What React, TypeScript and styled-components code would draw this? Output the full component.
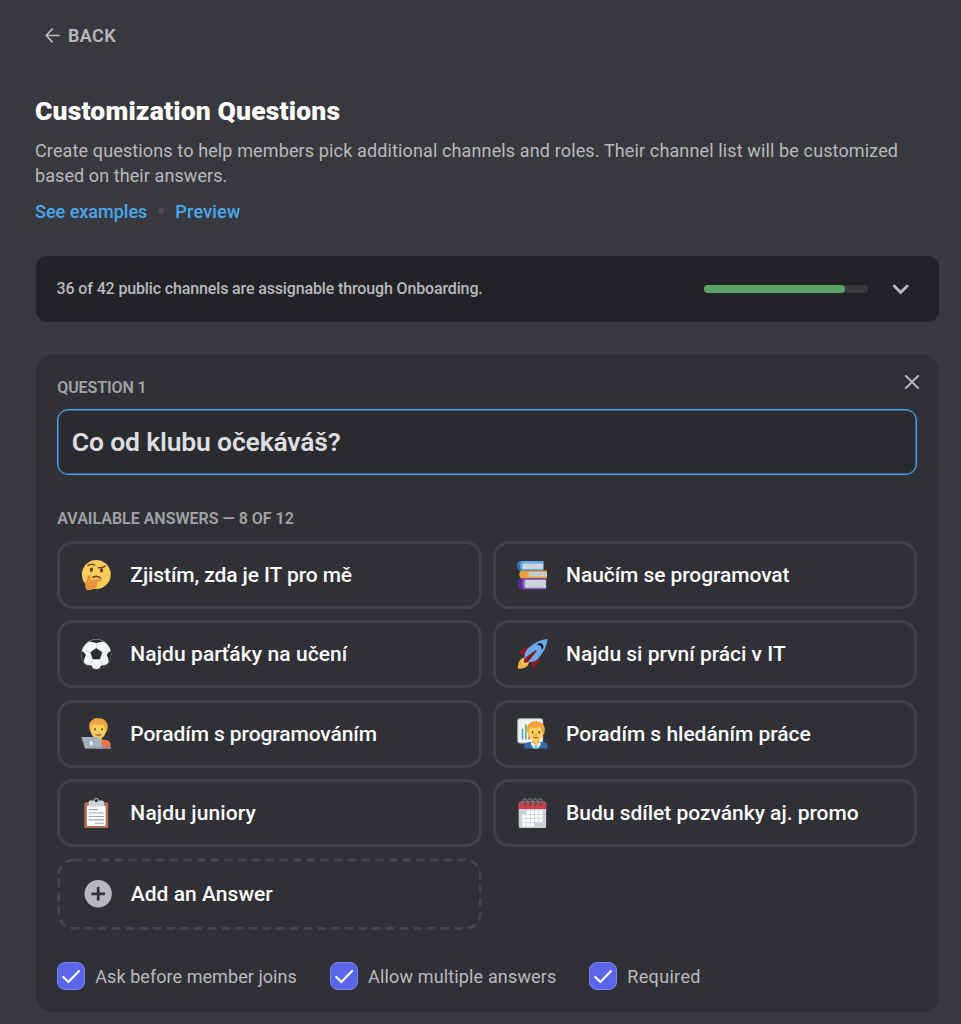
import React from 'react';
import styled, { createGlobalStyle, css } from 'styled-components';

const GlobalStyle = createGlobalStyle`
  *, *::before, *::after { box-sizing: border-box; }
  body {
    margin: 0;
    background: #38393e;
    color: #b8b9bd;
    font-family: Roboto, "Liberation Sans", sans-serif;
    font-size: 18px;
  }
`;

const Page = styled.main`
  display: flex;
  flex-direction: column;
  height: 1024px;
  overflow: hidden;
  padding: 23px 22px 0 35px;
`;

const Tracked = styled.span<{ $track?: number }>`
  letter-spacing: ${({ $track = 0 }) => $track}px;
  white-space: nowrap;
`;

const BackLink = styled.a`
  display: flex;
  align-items: center;
  gap: 8px;
  height: 24px;
  padding-left: 10px;
  font-weight: 600;
  letter-spacing: 0.4px;
`;

const Title = styled.h1`
  margin: 48px 0 0;
  color: #fff;
  font-size: 26.5px;
  font-weight: 900;
  line-height: 32px;
  letter-spacing: 0.17px;
`;

const Description = styled.p`
  display: flex;
  flex-direction: column;
  margin: 12px 0 0;
  line-height: 24.5px;
`;

const Links = styled.nav`
  display: flex;
  align-items: center;
  height: 24px;
  margin-top: 11px;
  color: #4ba6ee;
  font-weight: 500;
`;

const Dot = styled.span`
  width: 6px;
  height: 6px;
  margin: 0 11px;
  border-radius: 50%;
  background: #4b4c52;
`;

const Coverage = styled.section`
  display: flex;
  flex-shrink: 0;
  align-items: center;
  height: 66px;
  margin: 33px 0 0 0.6px;
  padding: 0 29px 0 21px;
  border-radius: 11px;
  background: #222327;
  font-size: 16px;
  font-weight: 500;
`;

const CoverageText = styled(Tracked)`
  padding-bottom: 1px;
`;

const Meter = styled.div`
  width: 164.5px;
  height: 8px;
  margin: 0 24px 0 auto;
  border-radius: 4px;
  background: #37393e;
`;

const MeterFill = styled.div`
  height: 100%;
  border-radius: 4px;
  background: #5da365;
`;

const Card = styled.section`
  display: flex;
  flex-shrink: 0;
  flex-direction: column;
  height: 657px;
  margin: 33px 0 0 0.6px;
  padding: 19px 21.7px 0;
  border-radius: 16px;
  background: #303136;
`;

const CardHeader = styled.header`
  display: flex;
  justify-content: space-between;
  height: 35px;
  margin-right: -2.4px;
`;

const Label = styled.h2<{ $track?: number }>`
  margin: 0;
  color: #a2a3a8;
  font-size: 16px;
  font-weight: 600;
  line-height: 27px;
  letter-spacing: ${({ $track = 0 }) => $track}px;
`;

const QuestionField = styled.div`
  display: flex;
  align-items: center;
  height: 66px;
  padding: 0 13px 2px 13.5px;
  border: 1px solid #48a5ed;
  border-radius: 11px;
  background: #2a2b2f;
  box-shadow: inset 0 0 0 0.5px #48a5ed;
  color: #dddee1;
  font-size: 26.5px;
  font-weight: 600;
`;

const AnswersLabel = styled(Label)`
  margin-top: 30px;
`;

const AnswerGrid = styled.div`
  display: grid;
  grid-template-columns: 1fr 1fr;
  gap: 11.4px;
  margin-top: 9px;
`;

const tile = css`
  display: flex;
  align-items: center;
  border-radius: 16px;
  color: #fbfbfc;
  font-size: 21px;
  font-weight: 500;
`;

const Answer = styled.div`
  ${tile}
  gap: 18.3px;
  height: 68px;
  padding-left: 21.2px;
  border: 3px solid #3f4146;
`;

const AddAnswer = styled.div`
  ${tile}
  position: relative;
  gap: 18.2px;
  height: 72px;
  margin-top: -0.6px;
  padding-left: 27.2px;
`;

const DashedOutline = styled.svg`
  position: absolute;
  inset: 0;
  width: 100%;
  height: 100%;
`;

const Options = styled.div`
  display: flex;
  height: 28px;
  margin-top: 32px;
`;

const Option = styled.label<{ $width?: number }>`
  display: flex;
  align-items: center;
  gap: 10.4px;
  width: ${({ $width }) => ($width ? `${$width}px` : 'auto')};
`;

const OptionText = styled(Tracked)`
  padding-top: 2px;
`;

const CheckBox = styled.span`
  display: flex;
  flex-shrink: 0;
  align-items: center;
  justify-content: center;
  width: 27.6px;
  height: 28px;
  border: 1.4px solid #7b84f1;
  border-radius: 8px;
  background: #5a65ea;
`;

const EmojiSvg = styled.svg`
  display: block;
  flex-shrink: 0;
  width: 30.6px;
  height: 30.6px;
`;

const Emoji = ({ children }: { children: React.ReactNode }) => (
  <EmojiSvg viewBox="0 0 36 36">{children}</EmojiSvg>
);

const Thinking = () => (
  <Emoji>
    <circle cx="18" cy="17" r="17" fill="#f9cb5c" />
    <ellipse cx="12.2" cy="11.6" rx="1.9" ry="2.7" fill="#65471b" />
    <ellipse cx="24.2" cy="12.2" rx="1.9" ry="2.7" fill="#65471b" />
    <path d="M8.2 6.6Q12 3.7 16.3 6" fill="none" stroke="#65471b" strokeWidth="1.6" strokeLinecap="round" />
    <path d="M20.3 9Q24.500 9.600 28.700 7.200" fill="none" stroke="#65471b" strokeWidth="1.6" strokeLinecap="round" />
    <path d="M14 20.300Q19 17.900 23 21.200" fill="none" stroke="#65471b" strokeWidth="1.8" strokeLinecap="round" />
    <path
      d="M8.5 19c.8-1.5 3-1.2 3.100.6.100 1.500-.7 2.800-.3 3.800 4-.3 8.100-1.400 11.800-1.300 1.800.1 2 2.300.3 2.800l-5.700 1.400c1.500.2 2 1.300 1.300 2.300.5 1-.1 1.900-.9 2.400.1 1.300-.8 2-2 2.400-2.800 1-6.400 3.800-9.400 1.600C4 33 4.800 27 6.700 23.500z"
      fill="#e99440"
    />
    <path d="M13 27l5.500-.900M13.500 30l4.500-1" fill="none" stroke="#d6843a" strokeWidth=".6" />
  </Emoji>
);

const Football = () => (
  <Emoji>
    <circle cx="18" cy="18" r="17.600" fill="#f1f5f9" stroke="#59636c" strokeWidth=".5" />
    <g fill="#292c31">
      <path d="M18 10.500l7 5.100-2.700 8.200h-8.600L11 15.600z" />
      <path d="M9.300 2.700Q18-1.600 26.700 2.700L23.500 3.500 18 4.700l-5.500-1.200z" />
      <path d="M35.400 14.500q1 7-2.700 13l-.6-4.300-1.800-4.500 2.300-3.500z" />
      <path d="M.6 14.500q-1 7 2.700 13l.6-4.300 1.800-4.500-2.300-3.500z" />
      <path d="M14.500 35.300q-6.500-1.200-10.500-7l3.300 2.300 4.900.7 1.300 1.800z" />
      <path d="M21.500 35.300q6.500-1.200 10.500-7l-3.300 2.300-4.900.7-1.300 1.800z" />
    </g>
    <path
      d="M18 4.700V11M25 16l6-2.200M22.300 24l3.400 7M13.700 24l-3.400 7M11 16L5 13.800"
      fill="none"
      stroke="#c5cfd8"
      strokeWidth=".8"
    />
  </Emoji>
);

const Books = () => (
  <Emoji>
    <path d="M4 21.800h30.500v12.700H4q-2.700-.8-2.700-6.300T4 21.800z" fill="#8c62c8" />
    <path d="M7.500 21.800q-2.200 6 0 12.700H4q-2.800-.6-2.800-6.300T4 21.800z" fill="#51308c" />
    <path d="M10.300 23.600H34v9H10.300q-2.600-4.500 0-9z" fill="#ccd4dc" />
    <path d="M5 12.300h30.300v9.200H5q-2.300-.8-2.300-4.600T5 12.300z" fill="#eb9c3d" />
    <path d="M14.500 14.300h20.800v5.200H14.500q-2.300-2.600 0-5.200z" fill="#ccd4dc" />
    <path d="M14 16.900h21" stroke="#9ba8b2" strokeWidth=".8" />
    <path d="M3 1.300h28.300V12.300H3Q.3 11 .3 6.900T3 1.300z" fill="#65a9e7" />
    <path d="M5 1.300q-2.500 5.500 0 11H3Q.3 11.200.3 6.900T3 1.300z" fill="#316da6" />
    <path d="M7.500 4h23.300V10.600H7.500q-2.400-3.300 0-6.600z" fill="#ccd4dc" />
  </Emoji>
);

const Rocket = () => (
  <Emoji>
    <path fill="#8c1a25" d="M1 17l8-7 16 1 1 16-7 8s.001-5.999-6-12-12-6-12-6z" />
    <path
      fill="#f5ad47"
      d="M.973 35s-.036-7.979 2.985-11S15 21.187 15 21.187 14.999 29 11.999 32c-3 3-11.026 3-11.026 3z"
    />
    <circle fill="#f9cb5c" cx="9" cy="27" r="4" />
    <path fill="#69abeb" d="M35.999 0s-10 0-22 10c-6 5-6 14-4 16s11 2 16-4c10-12 10-22 10-22z" />
    <path
      fill="#05070a"
      d="M26.999 5c-1.623 0-3.013.971-3.641 2.360.502-.227 1.055-.360 1.641-.360 2.209 0 4 1.791 4 4 0 .586-.133 1.139-.359 1.640 1.389-.627 2.359-2.017 2.359-3.640 0-2.209-1.791-4-4-4z"
    />
    <path fill="#8c1a25" d="M8 28s0-4 1-5 13.001-10.999 14-10-9.001 13-10.001 14S8 28 8 28z" />
  </Emoji>
);

const Head = () => (
  <g>
    <path d="M16.500 20h8v7.500q-4 4-8 0z" fill="#f2bd4b" />
    <path d="M10 13Q8.500 6 12.500 3 16-.6 21 .3q5.500-.3 8.700 4.200 3 4 1 10.500l-1.500 2H11.500z" fill="#f2a340" />
    <path d="M11.500 13.500q-.2-4.500 3.500-6 4.500 1.400 10-.2 3.700 1.700 4 6.200 1 9.500-8.500 10.700-9.500-1.200-9-10.700z" fill="#f9cf60" />
    <ellipse cx="16.500" cy="13.300" rx="1" ry="1.500" fill="#65471b" />
    <ellipse cx="24.700" cy="13.300" rx="1" ry="1.500" fill="#65471b" />
    <path d="M19.700 16.900h2" stroke="#c58a3b" strokeWidth="1" strokeLinecap="round" />
    <path d="M17 19.500q3.600 2 7.200 0-3.600.4-7.200 0z" fill="#a8572d" stroke="#a8572d" strokeWidth=".8" />
  </g>
);

const Technologist = () => (
  <Emoji>
    <path d="M17 36v-7q0-3 5-3.500h7q5.800.5 5.800 6V36z" fill="#e5744b" />
    <Head />
    <path d="M.8 22.500h19.500q1 0 1.300 1L26 35.800H4.800z" fill="#a5b2be" />
    <path d="M.8 22.500q-1.200 0-.7 1.500L4 35q.3.900 1.400.9z" fill="#6c7a86" />
    <path d="M22 33.800h12.500q1 .2.700 2.200H5z" fill="#8796a3" />
    <path d="M1.500 23h18.700q.8 0 1 .8L25.300 34.700H5.300z" fill="#a5b2be" />
    <ellipse cx="12" cy="29.500" rx="1.800" ry="2.600" fill="#edf1f5" transform="rotate(-12 12 29.500)" />
  </Emoji>
);

const OfficeWorker = () => (
  <Emoji>
    <rect x=".3" y=".2" width="30.500" height="29.800" rx="3.500" fill="#bcc8d3" />
    <rect x="1.700" y="1.600" width="27.700" height="27" rx="2.500" fill="#f0f4f7" />
    <path d="M6.500 12.500v12.700" stroke="#5596dc" strokeWidth="1.900" />
    <path d="M10.400 7.500v17.700" stroke="#74ad57" strokeWidth="1.900" />
    <path d="M14.500 20v5.200" stroke="#cf3b4c" strokeWidth="1.900" />
    <path d="M8.500 36v-3q.2-3.800 5-4.500l8.500-.8 9 .8q4.700.8 5 4.500v3z" fill="#326fa8" />
    <g transform="translate(2.500 3.600) scale(.96 .98)">
      <Head />
    </g>
    <path d="M17 28.300l5.200 3.500 5.100-3.500.8 2.200-3.200 5.500h-5.500l-3.200-5.500z" fill="#e8eef4" />
    <path d="M20.800 32h2.800l.8 4h-4.400z" fill="#79b5ea" />
  </Emoji>
);

const Clipboard = () => (
  <Emoji>
    <rect x="4" y="5" width="28" height="31" rx="2" fill="#b96e56" />
    <rect x="7" y="9" width="22" height="24" rx="1" fill="#fff" />
    <path
      fill="#ccd6dd"
      d="M25 3h-4c0-1.657-1.343-3-3-3s-3 1.343-3 3h-4c-1.104 0-2 .896-2 2v5h18V5c0-1.104-.896-2-2-2z"
    />
    <circle fill="#292f33" cx="18" cy="3" r="2" />
    <path
      d="M9.500 13.700h10M9.500 17.700h17M9.500 21.700h17M9.500 25.700h17M16.500 29.700h10"
      stroke="#99a8b4"
      strokeWidth="1.300"
      strokeLinecap="round"
    />
  </Emoji>
);

const CALENDAR_CELLS: [number, number][] = [
  [1, 0], [2, 0], [3, 0], [4, 0],
  [0, 1], [1, 1], [2, 1], [3, 1], [4, 1],
  [0, 2], [1, 2], [2, 2], [3, 2], [4, 2],
  [0, 3], [1, 3], [2, 3],
];

const Calendar = () => (
  <Emoji>
    <rect x="2" y="4" width="32.300" height="32" rx="3.500" fill="#c9d2da" />
    <path d="M2 13V8q0-4 4-4h24.300q4 0 4 4v5z" fill="#cc3d4a" />
    {CALENDAR_CELLS.map(([col, row]) => (
      <rect key={`${col}-${row}`} x={6.2 + col * 4.95} y={14.800 + row * 4.900} width="4" height="4" fill="#fff" />
    ))}
    {[8.300, 14.400, 20.500, 26.600].map((x) => (
      <g key={x}>
        <circle cx={x + 1} cy="7" r="1.700" fill="#4a3238" />
        <path
          d={`M${x + 1} 7Q${x - 2} 6.500 ${x - 1.5} 3.500T${x + 1.2} .9T${x + 3} 4`}
          fill="none"
          stroke="#66757f"
          strokeWidth="1.500"
          strokeLinecap="round"
        />
      </g>
    ))}
  </Emoji>
);

const ArrowLeft = () => (
  <svg width="15" height="15" viewBox="0 0 15 15" fill="none" stroke="#b8b9bd" strokeWidth="1.700" strokeLinecap="round" strokeLinejoin="round">
    <path d="M14 7.500H1.300M7.300 1.200L1.100 7.500l6.200 6.300" />
  </svg>
);

const Chevron = () => (
  <svg width="18" height="12" viewBox="0 0 18 12" fill="none" stroke="#bcbdc1" strokeWidth="2.800">
    <path d="M1.500 2.200l7.200 7.200 7.200-7.200" />
  </svg>
);

const Close = () => (
  <svg width="16" height="16" viewBox="0 0 16 16" fill="none" stroke="#c0c1c4" strokeWidth="1.900" strokeLinecap="round">
    <path d="M1.800 1.800l12.400 12.400M14.200 1.800L1.800 14.200" />
  </svg>
);

const PlusCircle = () => (
  <svg width="28" height="28" viewBox="0 0 28 28">
    <circle cx="14.200" cy="13.800" r="13.700" fill="#b8b9bc" />
    <path d="M14.200 7v13.600M7.400 13.800h13.600" stroke="#303136" strokeWidth="2.700" />
  </svg>
);

const Check = () => (
  <svg width="20" height="16" viewBox="0 0 20 16" fill="none" stroke="#fff" strokeWidth="2.200" strokeLinecap="round">
    <path d="M2.300 9l5.100 5L18 3" />
  </svg>
);

const ANSWERS: { Icon: () => React.JSX.Element; text: string; track: number }[] = [
  { Icon: Thinking, text: 'Zjistím, zda je IT pro mě', track: -0.1 },
  { Icon: Books, text: 'Naučím se programovat', track: -0.07 },
  { Icon: Football, text: 'Najdu parťáky na učení', track: 0.08 },
  { Icon: Rocket, text: 'Najdu si první práci v IT', track: 0 },
  { Icon: Technologist, text: 'Poradím s programováním', track: -0.09 },
  { Icon: OfficeWorker, text: 'Poradím s hledáním práce', track: -0.01 },
  { Icon: Clipboard, text: 'Najdu juniory', track: 0.12 },
  { Icon: Calendar, text: 'Budu sdílet pozvánky aj. promo', track: -0.02 },
];

const OPTIONS = [
  { text: 'Ask before member joins', track: 0.06, width: 272.8 },
  { text: 'Allow multiple answers', track: 0.15, width: 259.200 },
  { text: 'Required', track: 0.34, width: undefined },
];

export default function App() {
  const assignable = 36;
  const total = 42;

  return (
    <>
      <GlobalStyle />
      <Page>
        <BackLink>
          <ArrowLeft />
          BACK
        </BackLink>

        <Title>Customization Questions</Title>
        <Description>
          <Tracked $track={0.13}>
            Create questions to help members pick additional channels and roles. Their channel list will be customized
          </Tracked>
          <Tracked $track={0.08}>based on their answers.</Tracked>
        </Description>
        <Links>
          <Tracked>See examples</Tracked>
          <Dot />
          <Tracked $track={0.2}>Preview</Tracked>
        </Links>

        <Coverage>
          <CoverageText $track={-0.14}>
            {assignable} of {total} public channels are assignable through Onboarding.
          </CoverageText>
          <Meter>
            <MeterFill style={{ width: `${(assignable / total) * 100}%` }} />
          </Meter>
          <Chevron />
        </Coverage>

        <Card>
          <CardHeader>
            <Label $track={-0.1}>QUESTION 1</Label>
            <Close />
          </CardHeader>
          <QuestionField>
            <Tracked $track={-0.17}>Co od klubu očekáváš?</Tracked>
          </QuestionField>

          <AnswersLabel>AVAILABLE ANSWERS — 8 OF 12</AnswersLabel>
          <AnswerGrid>
            {ANSWERS.map(({ Icon, text, track }) => (
              <Answer key={text}>
                <Icon />
                <Tracked $track={track}>{text}</Tracked>
              </Answer>
            ))}
            <AddAnswer>
              <DashedOutline viewBox="0 0 424.300 72">
                <rect
                  x="1.800"
                  y="1.800"
                  width="421.500"
                  height="68.600"
                  rx="15"
                  fill="none"
                  stroke="#45464b"
                  strokeWidth="2.700"
                  strokeDasharray="8.300 5.400"
                />
              </DashedOutline>
              <PlusCircle />
              <Tracked $track={0.05}>Add an Answer</Tracked>
            </AddAnswer>
          </AnswerGrid>

          <Options>
            {OPTIONS.map(({ text, track, width }) => (
              <Option key={text} $width={width}>
                <CheckBox>
                  <Check />
                </CheckBox>
                <OptionText $track={track}>{text}</OptionText>
              </Option>
            ))}
          </Options>
        </Card>
      </Page>
    </>
  );
}
